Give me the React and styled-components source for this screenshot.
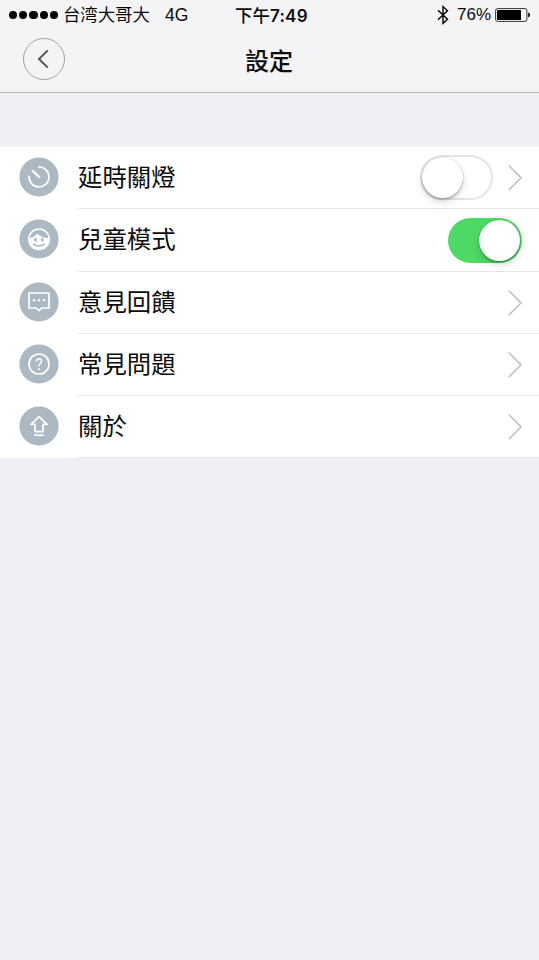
import React from 'react';
import styled, { createGlobalStyle } from 'styled-components';

const GlobalStyle = createGlobalStyle`
  * { box-sizing: border-box; }
  body {
    margin: 0;
    background: #efeff4;
    color: #0b0b0c;
    font-family: Inter, "Noto Sans CJK TC", sans-serif;
  }
`;

const Screen = styled.div`
  width: 539px;
  height: 960px;
  overflow: hidden;
  background: #efeff4;
`;

const Header = styled.header`
  height: 93px;
  background: #f4f4f6;
  border-bottom: 1px solid #b7b7ba;
`;

const StatusBar = styled.div`
  display: grid;
  grid-template-columns: 1fr auto 1fr;
  align-items: center;
  height: 30px;
  padding: 0 8px 0 9px;
  font-size: 17px;
  line-height: 30px;
  white-space: nowrap;
`;

const Carrier = styled.div`
  display: flex;
  align-items: center;
  height: 30px;
`;

const Signal = styled.div`
  display: flex;
  gap: 2px;
  margin-right: 5px;
`;

const Dot = styled.i`
  width: 8.2px;
  height: 8.2px;
  border-radius: 50%;
  background: #000;
`;

const CarrierName = styled.span`
  font-family: "Noto Sans CJK SC", sans-serif;
  font-size: 17.4px;
  line-height: 28px;
  margin: 0 15px 2px 0;
`;

const Network = styled.span`
  font-family: "Liberation Sans", sans-serif;
  font-size: 17.5px;
  line-height: 28px;
  margin-bottom: 1px;
`;

const Time = styled.span`
  height: 30px;
  line-height: 29px;
  font-weight: 600;
  font-size: 17px;
  letter-spacing: 0.3px;
  margin-left: 3px;
`;

const TimePrefix = styled.span`
  font-family: "Noto Sans CJK TC", sans-serif;
  font-weight: 500;
  font-size: 17.4px;
  letter-spacing: 0;
`;

const Power = styled.div`
  display: flex;
  align-items: center;
  justify-content: flex-end;
  height: 30px;
  font-family: "Liberation Sans", sans-serif;
`;

const BluetoothIcon = styled.svg`
  margin-right: 8px;
`;

const BatteryIcon = styled.svg`
  margin-left: 4px;
`;

const NavBar = styled.div`
  display: grid;
  grid-template-columns: 1fr auto 1fr;
  align-items: center;
  height: 58px;
  padding: 0 24px 0 23px;
`;

const BackButton = styled.button`
  display: flex;
  align-items: center;
  justify-content: center;
  width: 42px;
  height: 42px;
  padding: 0;
  border: 1px solid #a3a3a5;
  border-radius: 50%;
  background: transparent;
`;

const Title = styled.h1`
  margin: 5px 0 0;
  font-size: 24px;
  font-weight: 500;
  line-height: 36px;
`;

const List = styled.main`
  margin-top: 54px;
  background: #fff;
`;

const Row = styled.div`
  display: flex;
  height: ${({ $tall }) => ($tall ? '63px' : '62px')};
  padding-left: 19px;
`;

const IconDisc = styled.div`
  flex: none;
  width: 40px;
  height: 40px;
  margin: 10px 19px 0 0;

  svg { display: block; }
`;

const RowBody = styled.div`
  display: flex;
  flex: 1;
  align-items: center;
  height: 100%;
  padding-right: 17px;
  border-bottom: 1px solid #e6e6ea;
`;

const Label = styled.span`
  flex: 1;
  padding-bottom: 2px;
  font-size: 24.4px;
  line-height: 36px;
`;

const Switch = styled.div`
  display: flex;
  align-items: center;
  justify-content: ${({ $on }) => ($on ? 'flex-end' : 'flex-start')};
  width: ${({ $on }) => ($on ? '74px' : '73px')};
  height: 45px;
  padding: 0 ${({ $on }) => ($on ? '2px' : '0')};
  margin-right: ${({ $on }) => ($on ? '0' : '13px')};
  border: ${({ $on }) => ($on ? '0' : '2px solid #e4e4e5')};
  border-radius: 23px;
  background: ${({ $on }) => ($on ? '#4cd964' : '#fff')};
`;

const Knob = styled.div`
  width: 41px;
  height: 41px;
  border-radius: 50%;
  background: #fff;
  box-shadow: 0 0 1px rgba(0, 0, 0, 0.35), 0 2px 2px rgba(0, 0, 0, 0.2), 0 4px 9px rgba(0, 0, 0, 0.13);
`;

const Chevron = () => (
  <svg width="16" height="28" viewBox="0 0 16 28" fill="none" stroke="#c4c4c8" strokeWidth="1.7">
    <path d="M2.8 1.5 15 13.8 2.8 26.1" />
  </svg>
);

const Disc = ({ children }) => (
  <IconDisc>
    <svg width="40" height="40" viewBox="0 0 40 40" fill="none" stroke="#fff" strokeWidth="1.7">
      <circle cx="20" cy="20" r="19.6" fill="#acb9c3" stroke="none" />
      {children}
    </svg>
  </IconDisc>
);

const TimerGlyph = () => (
  <g>
    <path d="M19.3 10A10 10 0 1 1 10.1 18.7" />
    <path d="m13.8 14 6.4 6" strokeWidth="2.3" strokeLinecap="round" />
  </g>
);

const ChildGlyph = () => (
  <g>
    <circle cx="20" cy="20.2" r="10.2" />
    <path
      d="M10.2 19.2C13.2 18.6 16.4 17 18 14.4c2.2 2.7 6.8 4.4 11.8 4.8A9.9 9.9 0 1 1 10.2 19.2Z"
      fill="#fff"
      stroke="none"
    />
    <g fill="#acb9c3" stroke="none">
      <ellipse cx="16.5" cy="20.7" rx="1.5" ry="2" />
      <ellipse cx="23.4" cy="20.7" rx="1.5" ry="2" />
    </g>
    <path d="M14.6 25.2c2.9 2.4 7.9 2.4 10.8 0" stroke="#acb9c3" strokeWidth="1.7" strokeLinecap="round" />
  </g>
);

const FeedbackGlyph = () => (
  <g>
    <path d="M10 11h20v15h-7.2L20 28.7 17.2 26H10Z" strokeLinejoin="round" />
    <g fill="#fff" stroke="none">
      <circle cx="15.1" cy="18.3" r="1.2" />
      <circle cx="20" cy="18.3" r="1.2" />
      <circle cx="24.9" cy="18.3" r="1.2" />
    </g>
  </g>
);

const QuestionGlyph = () => (
  <g>
    <circle cx="20" cy="20" r="10" />
    <path d="M17.4 17.6c0-3.6 5.2-3.6 5.2-.3 0 2.2-2.6 2.2-2.6 4.9" strokeWidth="1.5" />
    <circle cx="20" cy="25" r="1" fill="#fff" stroke="none" />
  </g>
);

const AboutGlyph = () => (
  <g>
    <path d="m20 10.6 8 7.8h-4v7.2h-8v-7.2h-4Z" strokeLinejoin="round" />
    <path d="M15 29.2h10" />
  </g>
);

const Toggle = ({ on = false }) => (
  <Switch $on={on} role="switch" aria-checked={on}>
    <Knob />
  </Switch>
);

const items = [
  { label: '延時關燈', Glyph: TimerGlyph, toggle: true, on: false, chevron: true },
  { label: '兒童模式', Glyph: ChildGlyph, toggle: true, on: true, chevron: false, tall: true },
  { label: '意見回饋', Glyph: FeedbackGlyph, chevron: true },
  { label: '常見問題', Glyph: QuestionGlyph, chevron: true },
  { label: '關於', Glyph: AboutGlyph, chevron: true },
];

export default function App() {
  return (
    <Screen>
      <GlobalStyle />
      <Header>
        <StatusBar>
          <Carrier>
            <Signal>
              {[0, 1, 2, 3, 4].map((n) => (
                <Dot key={n} />
              ))}
            </Signal>
            <CarrierName>台湾大哥大</CarrierName>
            <Network>4G</Network>
          </Carrier>
          <Time>
            <TimePrefix>下午</TimePrefix>7:49
          </Time>
          <Power>
            <BluetoothIcon width="12" height="20" viewBox="0 0 12 20" fill="none" stroke="#000" strokeWidth="1.4">
              <path d="m1 5.3 9.5 9L6 18.4V1.6l4.5 4.1-9.5 9" />
            </BluetoothIcon>
            76%
            <BatteryIcon width="36" height="14" viewBox="0 0 36 14">
              <rect x="0.6" y="0.6" width="31.3" height="12.8" rx="2" fill="none" stroke="#333" />
              <rect x="2" y="2" width="24" height="10" rx="0.6" />
              <path d="M33.2 4.6c2.4.6 2.4 4.2 0 4.8Z" />
            </BatteryIcon>
          </Power>
        </StatusBar>
        <NavBar>
          <BackButton aria-label="返回">
            <svg width="14" height="20" viewBox="0 0 14 20" fill="none" stroke="#555558" strokeWidth="2">
              <path d="M10.8 1.4 2 10l8.8 8.6" />
            </svg>
          </BackButton>
          <Title>設定</Title>
        </NavBar>
      </Header>
      <List>
        {items.map(({ label, Glyph, toggle, on, chevron, tall }) => (
          <Row key={label} $tall={tall}>
            <Disc>
              <Glyph />
            </Disc>
            <RowBody>
              <Label>{label}</Label>
              {toggle && <Toggle on={on} />}
              {chevron && <Chevron />}
            </RowBody>
          </Row>
        ))}
      </List>
    </Screen>
  );
}
